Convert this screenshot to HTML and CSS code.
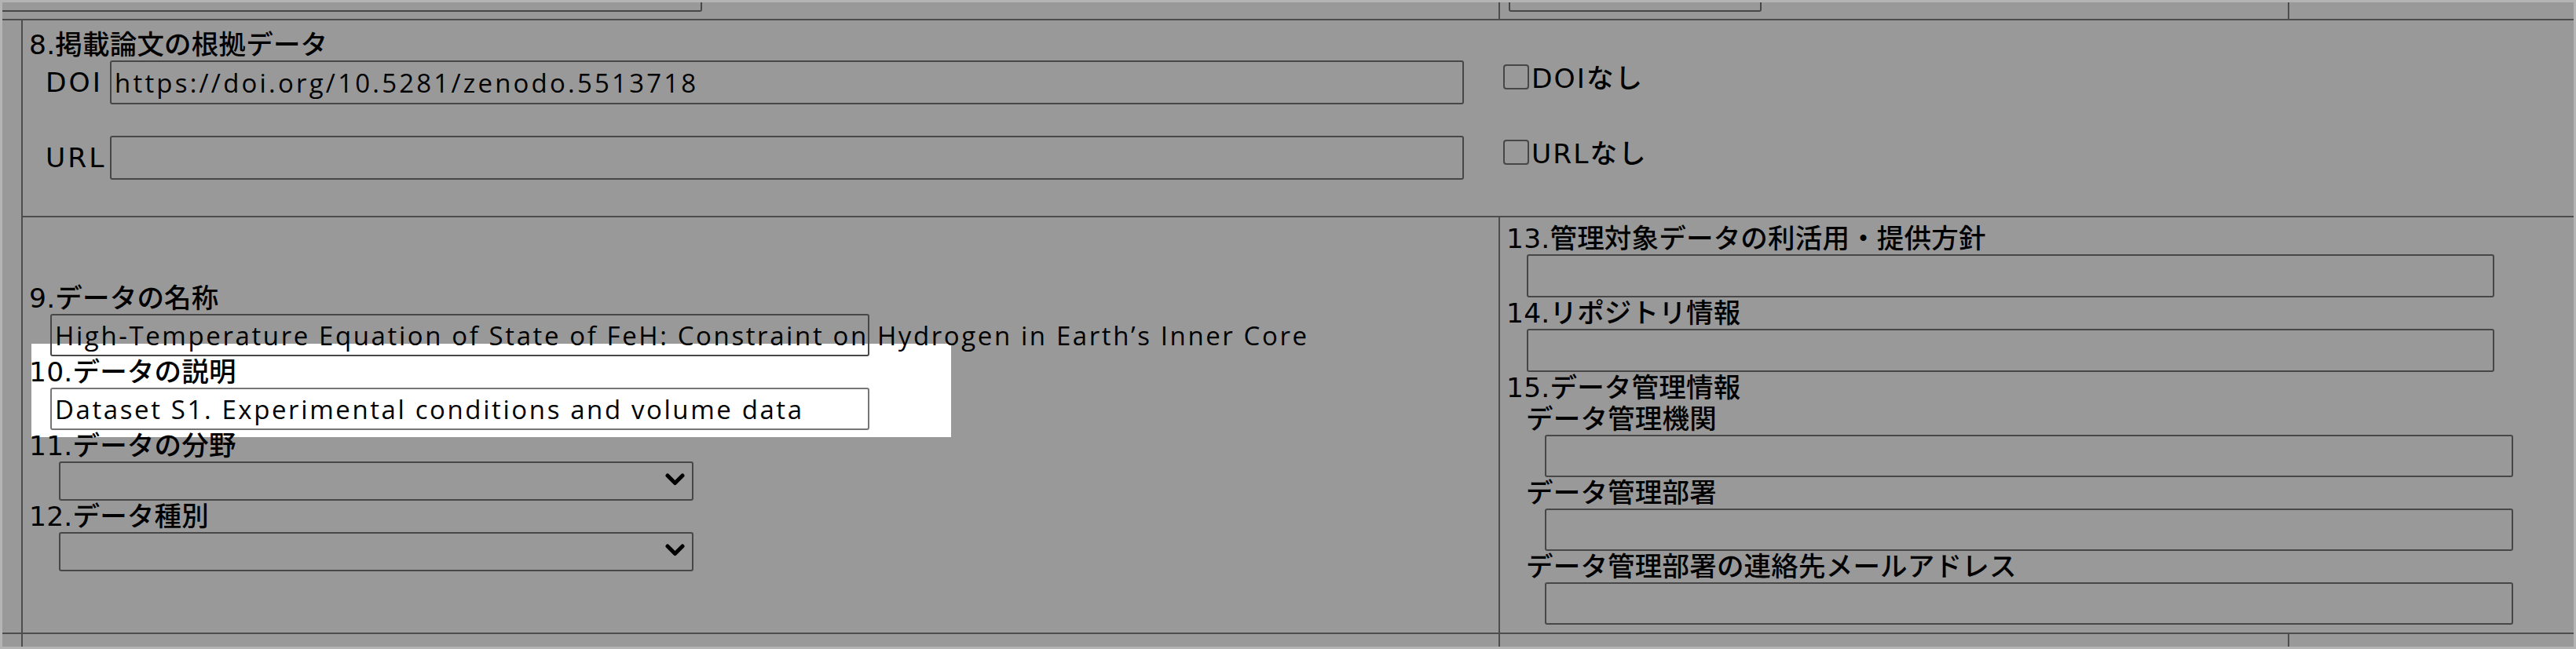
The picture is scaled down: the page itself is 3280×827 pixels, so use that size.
FILE: index.html
```html
<!DOCTYPE html>
<html lang="ja">
<head>
<meta charset="utf-8">
<title>データ管理計画</title>
<link rel="stylesheet" href="styles.css">
</head>
<body>
<div class="frame">
  <div class="toprow">
    <div class="tc tc-left"><div class="stub-a"></div></div>
    <div class="tc tc-mid"><div class="stub-b"></div></div>
    <div class="tc tc-right"></div>
  </div>
  <div class="mid">
    <div class="side"></div>
    <div class="main">
      <div class="sec8">
        <div class="lbl">8.掲載論文の根拠データ</div>
        <div class="g8">
          <div class="fline">
            <span class="l8">DOI</span>
            <input class="inp t8 doi" type="text" value="https://doi.org/10.5281/zenodo.5513718">
          </div>
          <label class="chk-cell"><input class="chk" type="checkbox"><span class="chk-txt">DOIなし</span></label>
          <div class="fline">
            <span class="l8">URL</span>
            <input class="inp t8" type="text" value="">
          </div>
          <label class="chk-cell"><input class="chk" type="checkbox"><span class="chk-txt">URLなし</span></label>
        </div>
      </div>
      <div class="sec9">
        <div class="lcell">
          <div class="spot"></div>
          <div class="lbl">9.データの名称</div>
          <div class="inp fld lf">High-Temperature Equation of State of FeH: Constraint on Hydrogen in Earth’s Inner Core</div>
          <div class="lbl">10.データの説明</div>
          <input class="inp lf lit" type="text" value="Dataset S1. Experimental conditions and volume data">
          <div class="lbl">11.データの分野</div>
          <div class="selwrap">
            <select class="sel"><option></option></select>
            <svg class="chev" width="25" height="16" viewBox="0 0 25 16"><polyline points="3,3 12.5,12.5 22,3" fill="none" stroke="#000" stroke-width="5" stroke-linecap="round" stroke-linejoin="round"/></svg>
          </div>
          <div class="lbl">12.データ種別</div>
          <div class="selwrap">
            <select class="sel"><option></option></select>
            <svg class="chev" width="25" height="16" viewBox="0 0 25 16"><polyline points="3,3 12.5,12.5 22,3" fill="none" stroke="#000" stroke-width="5" stroke-linecap="round" stroke-linejoin="round"/></svg>
          </div>
        </div>
        <div class="rcell">
          <div class="lbl">13.管理対象データの利活用・提供方針</div>
          <input class="inp rf" type="text" value="">
          <div class="lbl">14.リポジトリ情報</div>
          <input class="inp rf" type="text" value="">
          <div class="lbl">15.データ管理情報</div>
          <div class="lbl sub">データ管理機関</div>
          <input class="inp rs" type="text" value="">
          <div class="lbl sub">データ管理部署</div>
          <input class="inp rs" type="text" value="">
          <div class="lbl sub">データ管理部署の連絡先メールアドレス</div>
          <input class="inp rs" type="text" value="">
        </div>
      </div>
    </div>
  </div>
  <div class="botrow">
    <div class="bc bc-side"></div>
    <div class="bc bc-left"></div>
    <div class="bc bc-mid"></div>
    <div class="bc bc-right"></div>
  </div>
</div>
</body>
</html>
```

FILE: styles.css
```css
html, body {
  margin: 0;
  padding: 0;
}
body {
  width: 3280px;
  height: 827px;
  overflow: hidden;
  background: #999999;
  color: #000;
  font-family: "DejaVu Sans", "Noto Sans CJK JP", sans-serif;
  font-size: 34.5px;
}
.frame {
  box-sizing: border-box;
  width: 3280px;
  height: 827px;
  border: 3px solid #b4b4b4;
  display: flex;
  flex-direction: column;
}
.toprow {
  display: flex;
  height: 23px;
  flex: none;
  box-sizing: border-box;
  border-bottom: 2px solid #4d4d4d;
}
.tc {
  box-sizing: border-box;
}
.tc-left {
  width: 1907px;
  border-right: 2px solid #4d4d4d;
}
.tc-mid {
  width: 1005px;
  border-right: 2px solid #4d4d4d;
}
.tc-right {
  flex: 1;
}
.stub-a {
  box-sizing: border-box;
  width: 891px;
  height: 12px;
  border-right: 2px solid #474747;
  border-bottom: 2px solid #474747;
  border-bottom-right-radius: 3px;
}
.stub-b {
  box-sizing: border-box;
  margin-left: 11px;
  width: 322px;
  height: 12px;
  border: 2px solid #474747;
  border-top: 0;
  border-radius: 0 0 3px 3px;
}
.mid {
  display: flex;
  height: 780px;
  flex: none;
}
.side {
  box-sizing: border-box;
  width: 26px;
  border-right: 2px solid #4d4d4d;
}
.main {
  flex: 1;
  display: flex;
  flex-direction: column;
}
.sec8 {
  box-sizing: border-box;
  height: 251px;
  flex: none;
  padding-top: 11px;
  border-bottom: 2px solid #4d4d4d;
}
.lbl {
  line-height: 40px;
  height: 40px;
  padding-left: 8px;
  white-space: nowrap;
  font-weight: 500;
  letter-spacing: 0.2px;
}
.lbl.sub {
  padding-left: 33px;
}
.g8 {
  display: grid;
  grid-template-columns: 1881px 1fr;
  row-gap: 40px;
}
.fline {
  display: flex;
  align-items: center;
  padding-left: 29px;
}
.l8 {
  width: 82px;
  line-height: 40px;
  font-weight: 500;
  letter-spacing: 3px;
}
.inp {
  box-sizing: border-box;
  display: block;
  margin: 0;
  padding: 0 4px;
  border: 2px solid #474747;
  border-radius: 3px;
  background: transparent;
  color: #000;
  font-family: "Open Sans", "Noto Sans CJK JP", sans-serif;
  font-size: 33px;
  letter-spacing: 2.6px;
  outline: none;
}
.t8 {
  width: 1724px;
  height: 56px;
}
.doi {
  letter-spacing: 3.2px;
}
.chk-cell {
  display: flex;
  align-items: flex-start;
  padding: 5px 0 0 4px;
}
.chk {
  appearance: none;
  -webkit-appearance: none;
  box-sizing: border-box;
  width: 33px;
  height: 32px;
  margin: 0 3px 0 0;
  border: 2px solid #474747;
  border-radius: 4px;
  background: transparent;
}
.chk-txt {
  line-height: 36px;
  letter-spacing: 2px;
  font-weight: 500;
}
.sec9 {
  flex: 1;
  display: flex;
}
.lcell {
  box-sizing: border-box;
  width: 1881px;
  padding-top: 83px;
  border-right: 2px solid #4d4d4d;
  position: relative;
  z-index: 0;
}
.spot {
  position: absolute;
  left: 11px;
  top: 161px;
  width: 1171px;
  height: 119px;
  background: #ffffff;
  z-index: -1;
}
.lf {
  margin-left: 35px;
  width: 1043px;
  height: 54px;
}
.fld {
  display: flex;
  align-items: center;
  white-space: nowrap;
  overflow: visible;
}
.lit {
  border-color: #767676;
}
.selwrap {
  position: relative;
  margin-left: 46px;
  width: 808px;
  height: 50px;
}
.sel {
  appearance: none;
  -webkit-appearance: none;
  box-sizing: border-box;
  display: block;
  width: 100%;
  height: 50px;
  margin: 0;
  border: 2px solid #474747;
  border-radius: 3px;
  background: transparent;
  font-size: 30px;
}
.chev {
  position: absolute;
  right: 11px;
  top: 15px;
}
.rcell {
  flex: 1;
  padding-top: 7px;
}
.rf {
  margin-left: 34px;
  width: 1232px;
  height: 55px;
}
.rs {
  margin-left: 57px;
  width: 1233px;
  height: 54px;
}
.botrow {
  display: flex;
  flex: 1;
  border-top: 2px solid #4d4d4d;
}
.bc {
  box-sizing: border-box;
}
.bc-side {
  width: 26px;
  border-right: 2px solid #4d4d4d;
}
.bc-left {
  width: 1881px;
  border-right: 2px solid #4d4d4d;
}
.bc-mid {
  width: 1005px;
  border-right: 2px solid #4d4d4d;
}
.bc-right {
  flex: 1;
}
```
